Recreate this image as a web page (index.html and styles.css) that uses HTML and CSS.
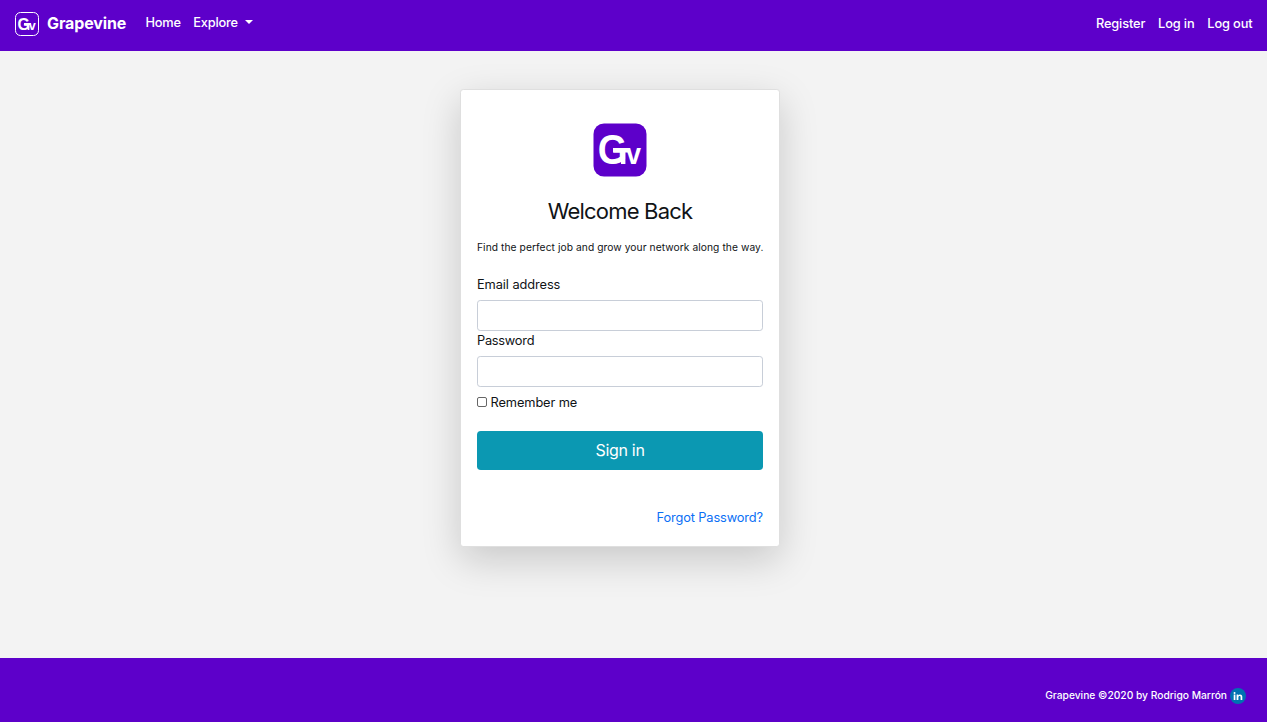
FILE: index.html
```html
<!DOCTYPE html>
<html lang="en">
<head>
<meta charset="utf-8">
<title>Grapevine</title>
<link rel="stylesheet" href="styles.css">
</head>
<body>
<nav class="navbar">
  <a class="brand">
    <svg class="brand-logo" viewBox="0 0 24 24">
      <rect x="0.5" y="0.5" width="23" height="23" rx="5" fill="none" stroke="#fff"/>
      <path d="M9 11.1h7v1.9h-1.6v5h-1.8v-5H9z" fill="#fff"/>
      <text class="logo-text" transform="translate(2.6 18) scale(.93 1)" font-size="17">G<tspan dx="-1.2" font-size="13.5">v</tspan></text>
    </svg>
    <span class="brand-name">Grapevine</span>
  </a>
  <div class="nav-links">
    <a class="home">Home</a>
    <a class="explore">Explore<span class="caret"></span></a>
  </div>
  <div class="account-links">
    <a class="register">Register</a>
    <a class="login">Log in</a>
    <a class="logout">Log out</a>
  </div>
</nav>
<main class="page">
  <form class="card">
    <svg class="card-logo" viewBox="0 0 54 54">
      <rect x=".5" y=".5" width="53" height="53" rx="10.5" fill="#5d00ca"/>
      <path d="M20 24.9h16v4.6h-3.6v11.5h-4.4V29.5h-8z" fill="#fff"/>
      <text class="logo-text" transform="translate(4.8 41) scale(.9 1)" font-size="42">G<tspan dx="-1.2" font-size="30">v</tspan></text>
    </svg>
    <h1 class="title"><span>Welcome Back</span></h1>
    <p class="tagline"><span>Find the perfect job and grow your network along the way.</span></p>
    <label class="label" for="email"><span class="email">Email address</span></label>
    <input class="field" id="email" type="email">
    <label class="label" for="password"><span class="password">Password</span></label>
    <input class="field" id="password" type="password">
    <label class="remember"><input class="check" type="checkbox"><span>Remember me</span></label>
    <button class="submit" type="button"><span>Sign in</span></button>
    <a class="forgot">Forgot Password?</a>
  </form>
</main>
<footer class="footer">
  <span class="copyright">Grapevine ©2020 by Rodrigo Marrón</span>
  <svg class="linkedin" viewBox="0 0 16 16">
    <circle cx="8" cy="8" r="8" fill="#0072b1"/>
    <path fill="#fff" d="M3.7 6.6h1.7v5.4H3.7zM4.55 3.9a1 1 0 1 1 0 2 1 1 0 0 1 0-2zM6.6 6.6h1.6v.8c.3-.6.9-.95 1.8-.95 1.8 0 2.3 1.1 2.3 2.6V12h-1.7V9.4c0-.8-.1-1.5-.95-1.5-.9 0-1.25.6-1.25 1.5V12H6.6z"/>
  </svg>
</footer>
</body>
</html>
```
FILE: styles.css
```css
* { box-sizing: border-box; }
body {
  margin: 0;
  height: 722px;
  display: flex;
  flex-direction: column;
  background: #f3f3f3;
  color: #212529;
  font: 400 12.8px/19px Inter, "Liberation Sans", sans-serif;
  white-space: nowrap;
}
.logo-text { fill: #fff; font-family: "Liberation Sans", sans-serif; font-weight: 700; }
.navbar {
  height: 51px;
  padding: 0 14.5px 0 15px;
  display: flex;
  align-items: flex-start;
  background: #5d00ca;
  color: #fff;
  font-weight: 500;
}
.brand { display: flex; padding-top: 12px; width: 130.4px; }
.brand-logo { width: 24px; height: 24px; margin-right: 8px; }
.brand-name { font-size: 16px; line-height: 23px; font-weight: 700; letter-spacing: -0.12px; }
.nav-links { display: flex; gap: 12.6px; padding-top: 13px; letter-spacing: -.2px; }
.explore { display: flex; align-items: center; }
.caret {
  margin-left: 7px;
  margin-top: -2px;
  border: 4px solid transparent;
  border-top-color: #fff;
  border-bottom: 0;
}
.account-links { display: flex; gap: 12.8px; margin-left: auto; padding-top: 14px; letter-spacing: -.13px; }
.page { flex: 1; padding: 38px 0 0 460px; }
.card {
  width: 320px;
  height: 458px;
  padding: 33px 16px 0;
  display: flex;
  flex-direction: column;
  border: 1px solid #dfdfdf;
  border-radius: 3.2px;
  background: #fff;
  box-shadow: 0 12.8px 38.4px rgba(0, 0, 0, .175);
  color: #101316;
}
.card-logo { width: 54px; height: 54px; align-self: center; }
.title { margin: 21px 0 0; font-size: 22px; line-height: 26px; font-weight: 400; text-align: center; letter-spacing: -0.8px; }
.tagline { margin: 16px 0 0; font-size: 10.24px; line-height: 15px; letter-spacing: .07px; }
.label { height: 19px; margin-top: 20px; letter-spacing: -.08px; }
.password { letter-spacing: -.25px; }
.field {
  width: 100%;
  height: 31px;
  margin: 6px 0 0;
  padding: 0 9px;
  border: 1px solid #c8ced8;
  border-radius: 3.2px;
  font: inherit;
}
.field + .label { margin-top: 0; }
.remember { display: flex; align-items: center; margin-top: 6px; height: 19px; letter-spacing: -.1px; }
.check { width: 10px; height: 10px; margin: -1px 3.5px 0 0; appearance: none; border: 1px solid #666; border-radius: 2px; background: #fff; }
.submit {
  height: 39px;
  margin-top: 19px;
  padding: 0;
  border: 0;
  border-radius: 3.8px;
  background: #0b98b2;
  color: #fff;
  font: 400 16px/24px Inter, "Liberation Sans", sans-serif;
  letter-spacing: -.3px;
}
.submit span { display: block; margin-top: -1px; }
.forgot { align-self: flex-end; margin-top: 38px; color: #0a6ff5; letter-spacing: -.12px; }
.footer {
  height: 64px;
  padding: 12px 21px 0 0;
  display: flex;
  justify-content: flex-end;
  align-items: center;
  gap: 3px;
  background: #5d00ca;
  color: #fff;
  font-size: 10.24px;
  font-weight: 500;
}
.copyright { margin-top: -1px; }
.linkedin { width: 16px; height: 16px; }
```
